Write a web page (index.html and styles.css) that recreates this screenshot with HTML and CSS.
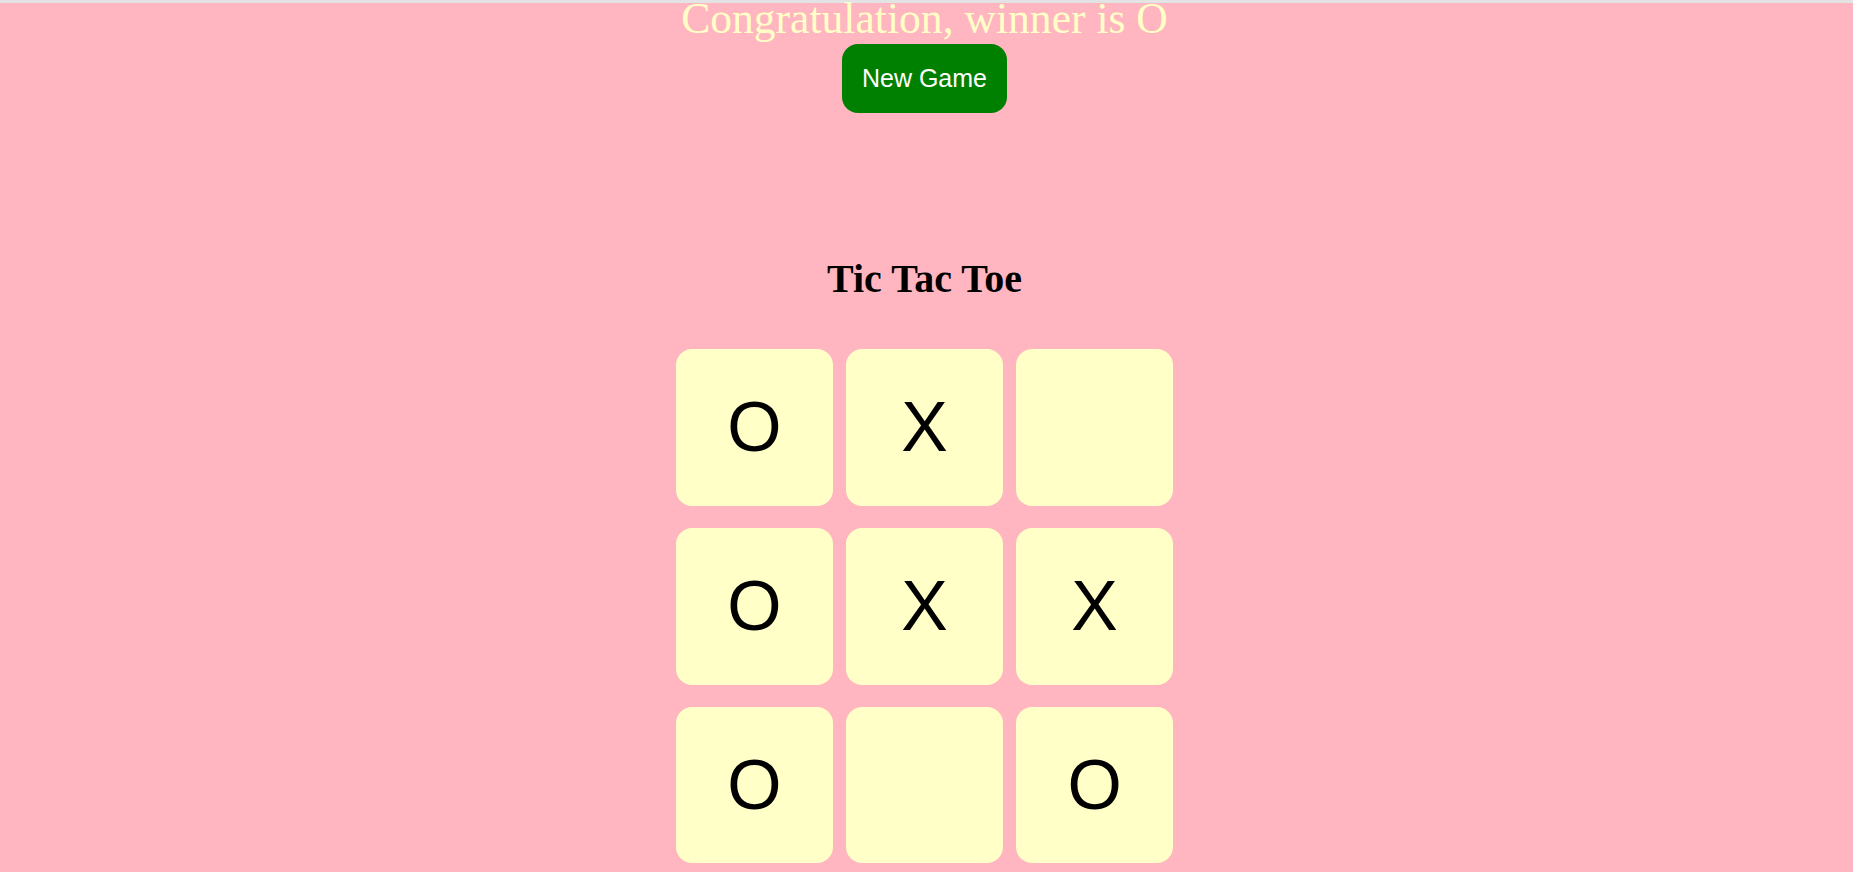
FILE: index.html
```html
<!DOCTYPE html>
<html lang="en">
<head>
<meta charset="utf-8">
<title>Tic Tac Toe</title>
<link rel="stylesheet" href="styles.css">
</head>
<body>
<div class="topbar"></div>
<div class="msg-container">
  <p class="msg">Congratulation, winner is O</p>
  <button class="new-btn">New Game</button>
</div>
<main class="main">
  <h1 class="title">Tic Tac Toe</h1>
  <div class="board">
    <button class="box">O</button>
    <button class="box">X</button>
    <button class="box"></button>
    <button class="box">O</button>
    <button class="box">X</button>
    <button class="box">X</button>
    <button class="box">O</button>
    <button class="box"></button>
    <button class="box">O</button>
  </div>
</main>
</body>
</html>
```
FILE: styles.css
```css
html, body {
  margin: 0;
  padding: 0;
}

body {
  background-color: #ffb6c1;
  font-family: "Liberation Serif", "Times New Roman", serif;
  overflow: hidden;
  padding-right: 4px;
}

.topbar {
  height: 3px;
  margin-right: -4px;
  background-color: #e3e3e3;
}

.msg-container {
  display: flex;
  flex-direction: column;
  align-items: center;
}

.msg {
  margin: 0;
  font-size: 5vmin;
  line-height: 31px;
  color: #ffffc7;
  font-family: "Liberation Serif", "Times New Roman", serif;
}

.new-btn {
  margin-top: 10px;
  padding: 20px;
  font-family: "Liberation Sans", Arial, sans-serif;
  font-size: 25px;
  line-height: normal;
  color: #ffffff;
  background-color: #008000;
  border: none;
  border-radius: 1rem;
}

.main {
  text-align: center;
  display: flex;
  flex-direction: column;
  align-items: center;
}

.title {
  margin: 142px 0 0;
  font-size: 40px;
  font-weight: bold;
  line-height: normal;
  color: #000000;
}

.board {
  margin-top: 47px;
  display: grid;
  grid-template-columns: repeat(3, 18vmin);
  grid-auto-rows: 18vmin;
  column-gap: 1.5vmin;
  row-gap: 2.5vmin;
}

.box {
  width: 18vmin;
  height: 18vmin;
  padding: 0;
  border: none;
  border-radius: 1rem;
  background-color: #ffffc7;
  color: #000000;
  font-family: "Liberation Sans", Arial, sans-serif;
  font-size: 8vmin;
}
```
